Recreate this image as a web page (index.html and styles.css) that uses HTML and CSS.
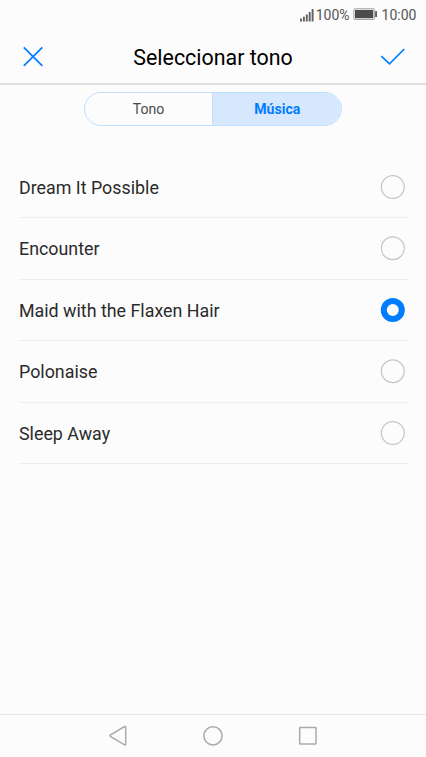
FILE: index.html
```html
<!DOCTYPE html>
<html lang="es">
<head>
<meta charset="utf-8">
<title>Seleccionar tono</title>
<link rel="stylesheet" href="styles.css">
</head>
<body>
<div class="status">
  <svg class="signal" width="16" height="14" viewBox="0 0 16 14"><path d="M1 10.6v2.9M3.9 8.8v4.7M6.8 6.4v7.1M9.7 3.9v9.6M12.6 1v12.5" /></svg>
  <span class="percent">100%</span>
  <svg class="battery" width="25" height="13" viewBox="0 0 25 13"><rect class="shell" x=".9" y=".8" width="20.4" height="10.6" rx="1"/><rect class="fill" x="2" y="2" width="18.2" height="8.2"/><rect class="fill" x="22.2" y="3.2" width="1.7" height="5.8"/></svg>
  <span class="time">10:00</span>
</div>
<header class="header">
  <svg class="action" width="24" height="24" viewBox="0 0 24 24"><path d="M2.8 2.4L21.3 20.9M21.3 2.4L2.8 20.9"/></svg>
  <h1 class="title"><span>Seleccionar tono</span></h1>
  <svg class="action" width="26" height="24" viewBox="0 0 26 24"><path d="M1.3 11.1L9.5 18.8L24.3 4"/></svg>
</header>
<div class="tabs">
  <div class="tab">Tono</div>
  <div class="tab active">Música</div>
</div>
<main class="list">
  <div class="row"><span>Dream It Possible</span><svg class="radio" width="26" height="26"><circle cx="12.8" cy="13" r="11.4"/></svg></div>
  <div class="row"><span>Encounter</span><svg class="radio" width="26" height="26"><circle cx="12.8" cy="13.2" r="11.4"/></svg></div>
  <div class="row"><span>Maid with the Flaxen Hair</span><svg class="radio selected" width="26" height="26"><circle cx="12.8" cy="13" r="9"/></svg></div>
  <div class="row"><span>Polonaise</span><svg class="radio" width="26" height="26"><circle cx="12.8" cy="13.2" r="11.4"/></svg></div>
  <div class="row"><span>Sleep Away</span><svg class="radio" width="26" height="26"><circle cx="12.8" cy="13" r="11.4"/></svg></div>
</main>
<nav class="nav">
  <svg width="22" height="22" viewBox="0 0 22 22"><path d="M3.3 10.1Q2.6 10.7 3.3 11.3L17.6 19.9Q18.7 20.3 18.7 19.1V2.3Q18.7 1.1 17.6 1.5Z"/></svg>
  <svg width="22" height="22" viewBox="0 0 22 22"><circle cx="11" cy="10.8" r="9.1"/></svg>
  <svg width="22" height="22" viewBox="0 0 22 22"><rect x="2.7" y="2.6" width="16.3" height="16.3" rx=".5"/></svg>
</nav>
</body>
</html>
```
FILE: styles.css
```css
* { box-sizing: border-box; }
body {
  margin: 0;
  height: 757px;
  display: flex;
  flex-direction: column;
  overflow: hidden;
  background: #fcfcfc;
  color: #2b2b2b;
  font-family: Roboto, sans-serif;
}
svg { display: block; flex: none; fill: none; }
.status {
  height: 29px;
  display: flex;
  align-items: center;
  justify-content: flex-end;
  padding-right: 9.6px;
  font-size: 14px;
  color: #555;
}
.signal { stroke: #606060; stroke-width: 1.9; }
.battery { margin: 0 3.5px 0 3.5px; }
.shell { stroke: #999; stroke-width: 1; }
.fill { fill: #4c4c4c; }
.header {
  height: 56px;
  flex: none;
  display: flex;
  align-items: center;
  justify-content: space-between;
  padding: 1px 20px 0 21px;
  border-bottom: 2px solid #dedede;
}
.action { stroke: #007dff; stroke-width: 1.7; }
.title { margin: 0; padding: 2px 0 0 1px; font-size: 21.4px; font-weight: 400; line-height: 30px; color: #000; }
.tabs {
  width: 258.5px;
  height: 33.5px;
  flex: none;
  margin: 7px 0 0 83.7px;
  display: flex;
  border: 1px solid #bfdfff;
  border-radius: 17px;
  overflow: hidden;
}
.tab { flex: 1; text-align: center; font-size: 14.1px; line-height: 33px; color: #4c4c4c; }
.active { background: #d6e8fd; border-left: 1px solid #bfdfff; color: #007dff; font-weight: 700; }
.list { flex: 1; padding: 31px 18px 0 19px; }
.row {
  height: 61.5px;
  display: flex;
  align-items: center;
  justify-content: space-between;
  border-bottom: 1px solid #eee;
  font-size: 17.85px;
}
.row span { padding-top: 1px; }
.radio { margin-right: 2px; stroke: #c4c4c4; stroke-width: 1.2; }
.selected { stroke: #007dff; stroke-width: 6; }
.nav {
  height: 43px;
  display: flex;
  align-items: center;
  justify-content: center;
  gap: 73px;
  border-top: 1px solid #e5e5e5;
}
.nav svg { stroke: #aaa; stroke-width: 1.5; }
```
